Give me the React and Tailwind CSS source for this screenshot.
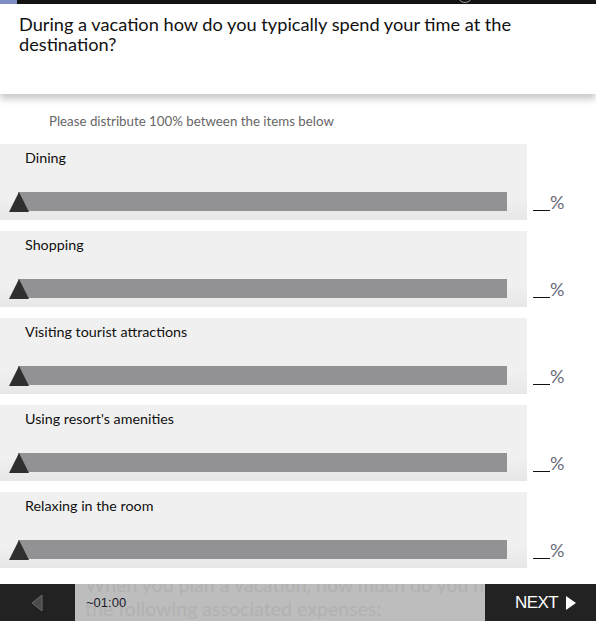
import React from "react";

const items = [
  "Dining",
  "Shopping",
  "Visiting tourist attractions",
  "Using resort's amenities",
  "Relaxing in the room",
];

function Row({ label }) {
  return (
    <div className="flex">
      <div className="relative w-[527px] h-[76px] bg-[linear-gradient(to_bottom,#f0f0f0_0%,#f0f0f0_70%,#e7e7e7_100%)]">
        <div className="pl-[25px] pt-[5px] text-[14.3px] leading-[17px] text-[#111]">{label}</div>
        <div className="absolute left-[18px] top-[48px] w-[489px] h-[19px] bg-[#929295]" />
        <svg className="absolute left-[9px] top-[48px]" width="20" height="20" viewBox="0 0 20 20">
          <polygon points="10,0 20,20 0,20" fill="#2f2f2f" />
        </svg>
      </div>
      <div className="flex items-end pb-[8px] pl-[6px]">
        <span className="inline-block w-[17px] border-b border-[#111] h-[14px] mb-[1px]" />
        <span className="text-[18px] leading-[20px] text-[#6a6a78]">%</span>
      </div>
    </div>
  );
}

export default function App() {
  return (
    <div className="w-[596px] h-[621px] overflow-hidden bg-white font-['Lato','Noto_Sans',sans-serif]">
      <div className="relative h-[4px] bg-[#141414] overflow-hidden">
        <div className="w-[17px] h-full bg-[#7f8fc4]" />
        <div className="absolute left-[457px] top-[-13px] w-[16px] h-[16px] rounded-full border border-[#9a9a9a]" />
      </div>
      <div className="relative z-10 h-[90px] bg-white px-[19px] pt-[10px] shadow-[0_5px_7px_rgba(0,0,0,0.22)]">
        <p className="text-[18.2px] leading-[20px] text-[#111] w-[540px]">
          During a vacation how do you typically spend your time at the destination?
        </p>
      </div>
      <div className="h-[50px] pl-[49px] pt-[19px] text-[13.3px] leading-[16px] text-[#666]">
        Please distribute 100% between the items below
      </div>
      <div className="flex flex-col gap-[11px]">
        {items.map((l) => (
          <Row key={l} label={l} />
        ))}
      </div>
      <div className="mt-[16px] h-[37px] flex">
        <div className="w-[75px] bg-[#222] flex items-center justify-center">
          <svg width="12" height="16" viewBox="0 0 12 16" className="ml-[-2px]">
            <polygon points="11,0 11,16 1,8" fill="#4b4b4b" stroke="#6a6a6a" strokeWidth="1" />
          </svg>
        </div>
        <div className="relative flex-1 bg-[#bdbdbd] overflow-hidden">
          <div className="mt-[-11px] pl-[10px] text-[19.5px] leading-[24px] font-medium text-[#b2b2b2] whitespace-nowrap">
            <div>When you plan a vacation, how much do you normally spend on</div>
            <div>the following associated expenses:</div>
          </div>
          <div className="absolute left-[11px] top-[11px] text-[13px] leading-[16px] text-[#1c1c2c] font-['Liberation_Sans',sans-serif]">
            ~01:00
          </div>
        </div>
        <div className="w-[111px] bg-[#222] flex items-center pl-[30px] gap-[8px]">
          <span className="text-white text-[17px] leading-[20px] font-['Liberation_Sans',sans-serif] tracking-[-0.6px]">NEXT</span>
          <svg width="10" height="14" viewBox="0 0 10 14">
            <polygon points="0,0 10,7 0,14" fill="#fff" />
          </svg>
        </div>
      </div>
    </div>
  );
}
